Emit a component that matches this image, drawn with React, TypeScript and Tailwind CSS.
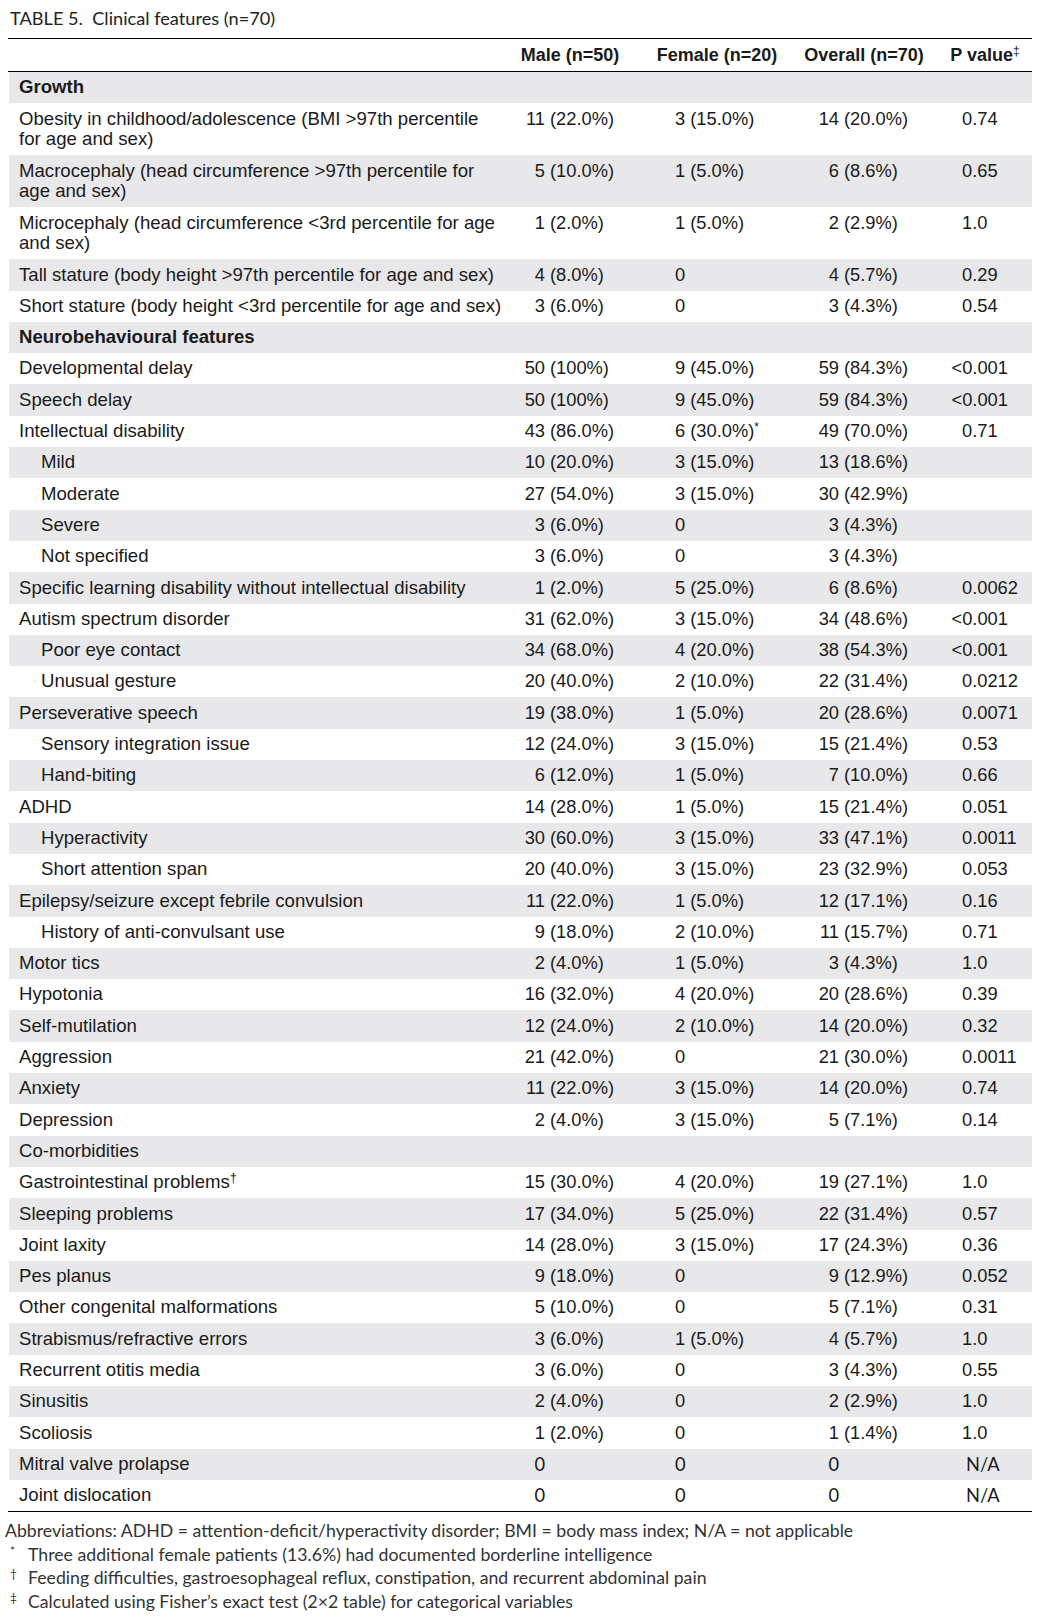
import React from "react";

type Row = {
  label: string | string[];
  kind?: "bold" | "plain";
  indent?: boolean;
  sup?: string;
  m?: string;
  f?: string;
  fsup?: string;
  o?: string;
  p?: string;
  gill?: boolean;
};

const rows: Row[] = [
  { label: "Growth", kind: "bold" },
  { label: ["Obesity in childhood/adolescence (BMI >97th percentile", "for age and sex)"], m: "11 (22.0%)", f: "3 (15.0%)", o: "14 (20.0%)", p: "0.74" },
  { label: ["Macrocephaly (head circumference >97th percentile for", "age and sex)"], m: "5 (10.0%)", f: "1 (5.0%)", o: "6 (8.6%)", p: "0.65" },
  { label: ["Microcephaly (head circumference <3rd percentile for age", "and sex)"], m: "1 (2.0%)", f: "1 (5.0%)", o: "2 (2.9%)", p: "1.0" },
  { label: "Tall stature (body height >97th percentile for age and sex)", m: "4 (8.0%)", f: "0", o: "4 (5.7%)", p: "0.29" },
  { label: "Short stature (body height <3rd percentile for age and sex)", m: "3 (6.0%)", f: "0", o: "3 (4.3%)", p: "0.54" },
  { label: "Neurobehavioural features", kind: "bold" },
  { label: "Developmental delay", m: "50 (100%)", f: "9 (45.0%)", o: "59 (84.3%)", p: "<0.001" },
  { label: "Speech delay", m: "50 (100%)", f: "9 (45.0%)", o: "59 (84.3%)", p: "<0.001" },
  { label: "Intellectual disability", m: "43 (86.0%)", f: "6 (30.0%)", fsup: "*", o: "49 (70.0%)", p: "0.71" },
  { label: "Mild", indent: true, m: "10 (20.0%)", f: "3 (15.0%)", o: "13 (18.6%)" },
  { label: "Moderate", indent: true, m: "27 (54.0%)", f: "3 (15.0%)", o: "30 (42.9%)" },
  { label: "Severe", indent: true, m: "3 (6.0%)", f: "0", o: "3 (4.3%)" },
  { label: "Not specified", indent: true, m: "3 (6.0%)", f: "0", o: "3 (4.3%)" },
  { label: "Specific learning disability without intellectual disability", m: "1 (2.0%)", f: "5 (25.0%)", o: "6 (8.6%)", p: "0.0062" },
  { label: "Autism spectrum disorder", m: "31 (62.0%)", f: "3 (15.0%)", o: "34 (48.6%)", p: "<0.001" },
  { label: "Poor eye contact", indent: true, m: "34 (68.0%)", f: "4 (20.0%)", o: "38 (54.3%)", p: "<0.001" },
  { label: "Unusual gesture", indent: true, m: "20 (40.0%)", f: "2 (10.0%)", o: "22 (31.4%)", p: "0.0212" },
  { label: "Perseverative speech", m: "19 (38.0%)", f: "1 (5.0%)", o: "20 (28.6%)", p: "0.0071" },
  { label: "Sensory integration issue", indent: true, m: "12 (24.0%)", f: "3 (15.0%)", o: "15 (21.4%)", p: "0.53" },
  { label: "Hand-biting", indent: true, m: "6 (12.0%)", f: "1 (5.0%)", o: "7 (10.0%)", p: "0.66" },
  { label: "ADHD", m: "14 (28.0%)", f: "1 (5.0%)", o: "15 (21.4%)", p: "0.051" },
  { label: "Hyperactivity", indent: true, m: "30 (60.0%)", f: "3 (15.0%)", o: "33 (47.1%)", p: "0.0011" },
  { label: "Short attention span", indent: true, m: "20 (40.0%)", f: "3 (15.0%)", o: "23 (32.9%)", p: "0.053" },
  { label: "Epilepsy/seizure except febrile convulsion", m: "11 (22.0%)", f: "1 (5.0%)", o: "12 (17.1%)", p: "0.16" },
  { label: "History of anti-convulsant use", indent: true, m: "9 (18.0%)", f: "2 (10.0%)", o: "11 (15.7%)", p: "0.71" },
  { label: "Motor tics", m: "2 (4.0%)", f: "1 (5.0%)", o: "3 (4.3%)", p: "1.0" },
  { label: "Hypotonia", m: "16 (32.0%)", f: "4 (20.0%)", o: "20 (28.6%)", p: "0.39" },
  { label: "Self-mutilation", m: "12 (24.0%)", f: "2 (10.0%)", o: "14 (20.0%)", p: "0.32" },
  { label: "Aggression", m: "21 (42.0%)", f: "0", o: "21 (30.0%)", p: "0.0011" },
  { label: "Anxiety", m: "11 (22.0%)", f: "3 (15.0%)", o: "14 (20.0%)", p: "0.74" },
  { label: "Depression", m: "2 (4.0%)", f: "3 (15.0%)", o: "5 (7.1%)", p: "0.14" },
  { label: "Co-morbidities", kind: "plain" },
  { label: "Gastrointestinal problems", sup: "†", m: "15 (30.0%)", f: "4 (20.0%)", o: "19 (27.1%)", p: "1.0" },
  { label: "Sleeping problems", m: "17 (34.0%)", f: "5 (25.0%)", o: "22 (31.4%)", p: "0.57" },
  { label: "Joint laxity", m: "14 (28.0%)", f: "3 (15.0%)", o: "17 (24.3%)", p: "0.36" },
  { label: "Pes planus", m: "9 (18.0%)", f: "0", o: "9 (12.9%)", p: "0.052" },
  { label: "Other congenital malformations", m: "5 (10.0%)", f: "0", o: "5 (7.1%)", p: "0.31" },
  { label: "Strabismus/refractive errors", m: "3 (6.0%)", f: "1 (5.0%)", o: "4 (5.7%)", p: "1.0" },
  { label: "Recurrent otitis media", m: "3 (6.0%)", f: "0", o: "3 (4.3%)", p: "0.55" },
  { label: "Sinusitis", m: "2 (4.0%)", f: "0", o: "2 (2.9%)", p: "1.0" },
  { label: "Scoliosis", m: "1 (2.0%)", f: "0", o: "1 (1.4%)", p: "1.0" },
  { label: "Mitral valve prolapse", m: "0", f: "0", o: "0", p: "N/A", gill: true },
  { label: "Joint dislocation", m: "0", f: "0", o: "0", p: "N/A", gill: true },
];

// count right-aligned in a fixed box so the brackets line up
function Count({ v }: { v?: string }) {
  if (!v) return null;
  const at = v.indexOf(" ");
  const num = at < 0 ? v : v.slice(0, at);
  const rest = at < 0 ? "" : v.slice(at + 1);
  return (
    <>
      <span className="inline-block w-[40px] text-right">{num}</span>
      {rest && <span className="ml-[5px]">{rest}</span>}
    </>
  );
}

function PValue({ v, gill }: { v?: string; gill?: boolean }) {
  if (!v) return null;
  if (v.startsWith("<"))
    return (
      <>
        <span className="ml-[-10.5px]">&lt;</span>
        {v.slice(1)}
      </>
    );
  return <span className={gill ? "ml-[4px]" : ""}>{v}</span>;
}

export default function App() {
  return (
    <div className="w-[1045px] min-h-[1618px] bg-white text-[#1a1a1a]">
      {/* Title */}
      <div className="h-[38px] pl-[10px] flex items-center font-['Lato',sans-serif] text-[18.2px] text-[#222]">
        TABLE 5.&nbsp; Clinical features (n=70)
      </div>

      <div className="ml-[8px] w-[1024px] font-['Liberation_Sans',Arial,sans-serif]">
        <div className="h-px bg-black" />
        {/* Header */}
        <div className="ml-px grid grid-cols-[496px_130px_164px_130px_103px] h-[32px] items-center text-[18px] font-bold">
          <div />
          <div className="text-center">Male (n=50)</div>
          <div className="text-center">Female (n=20)</div>
          <div className="text-center">Overall (n=70)</div>
          <div className="text-center pl-[9px]">
            P value<sup className="text-[12px] font-normal">‡</sup>
          </div>
        </div>
        <div className="h-px bg-black" />

        {/* Body */}
        <div className="ml-px">
          {rows.map((r, i) => (
            <div
              key={i}
              className={
                "grid grid-cols-[496px_130px_164px_130px_103px] py-[5.3px] leading-[20.7px] " +
                (i % 2 === 0 ? "bg-[#e8e8ea]" : "bg-white")
              }
            >
              <div
                className={
                  "text-[18.6px] whitespace-nowrap " +
                  (r.indent ? "pl-[32px] " : "pl-[10px] ") +
                  (r.kind === "bold" ? "font-bold" : "")
                }
              >
                {Array.isArray(r.label)
                  ? r.label.map((l, j) => <div key={j}>{l}</div>)
                  : r.label}
                {r.sup && <sup className="text-[13px]">{r.sup}</sup>}
              </div>
              <div className={"text-[18.3px] whitespace-nowrap " + (r.gill ? "font-['Lato',sans-serif]" : "")}>
                <Count v={r.m} />
              </div>
              <div className={"text-[18.3px] whitespace-nowrap pl-[40px] " + (r.gill ? "font-['Lato',sans-serif]" : "")}>
                {r.f}
                {r.fsup && <sup className="text-[12px]">{r.fsup}</sup>}
              </div>
              <div className={"text-[18.3px] whitespace-nowrap " + (r.gill ? "font-['Lato',sans-serif]" : "")}>
                <Count v={r.o} />
              </div>
              <div className={"text-[18.3px] whitespace-nowrap pl-[33px] " + (r.gill ? "font-['Lato',sans-serif]" : "")}>
                <PValue v={r.p} gill={r.gill} />
              </div>
            </div>
          ))}
        </div>
        <div className="h-px bg-black" />
      </div>

      {/* Footnotes */}
      <div className="mt-[7px] font-['Lato',sans-serif] text-[17.7px] leading-[23.5px] text-[#333]">
        <div className="pl-[5px]">
          Abbreviations: ADHD = attention-deficit/hyperactivity disorder; BMI = body mass index; N/A = not applicable
        </div>
        <div className="flex pl-[10px]">
          <span className="w-[18px] text-[12px] leading-[16px]">*</span>
          <span>Three additional female patients (13.6%) had documented borderline intelligence</span>
        </div>
        <div className="flex pl-[10px]">
          <span className="w-[18px] text-[12px] leading-[16px]">†</span>
          <span>Feeding difficulties, gastroesophageal reflux, constipation, and recurrent abdominal pain</span>
        </div>
        <div className="flex pl-[10px]">
          <span className="w-[18px] text-[12px] leading-[16px]">‡</span>
          <span>Calculated using Fisher’s exact test (2×2 table) for categorical variables</span>
        </div>
      </div>
    </div>
  );
}
